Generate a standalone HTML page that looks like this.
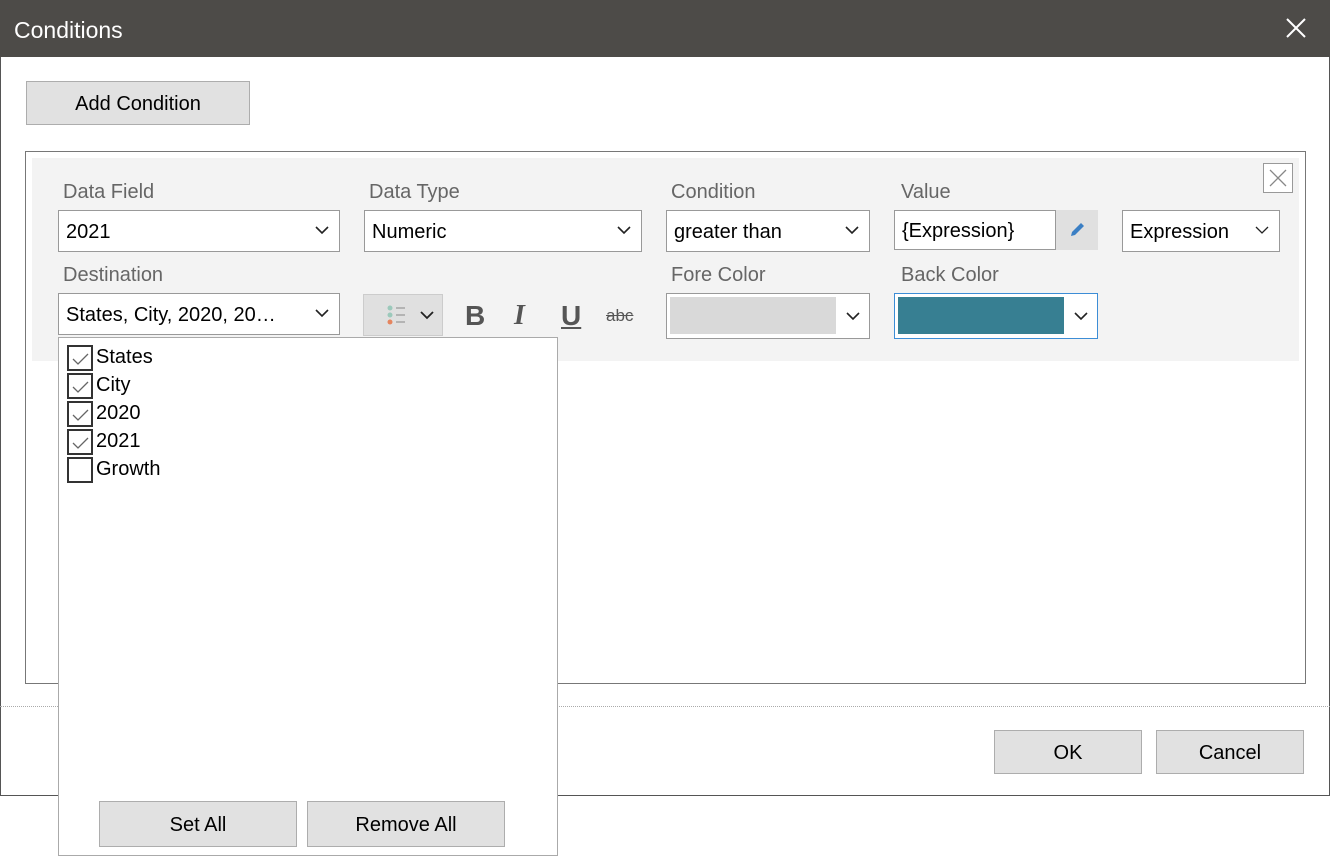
<!DOCTYPE html>
<html><head><meta charset="utf-8"><style>
*{box-sizing:border-box;margin:0;padding:0}
body{width:1330px;height:856px;background:#fff;position:relative;overflow:hidden;font-family:"Liberation Sans",sans-serif;font-size:20px;color:#000}
.a{position:absolute}
.title{left:0;top:0;width:1330px;height:57px;background:#4d4b48;color:#fff;font-size:23px;padding:17px 0 0 14px}
.btn{position:absolute;background:#e1e1e1;border:1px solid #adadad;display:flex;align-items:center;justify-content:center;font-size:20px;padding-top:2px}
.lbl{position:absolute;color:#666;font-size:20px}
.dd{position:absolute;background:#fff;border:1px solid #999;padding:2px 0 0 7px;display:flex;align-items:center;font-size:20px}
.chev{position:absolute;right:10px;top:50%;margin-top:-5px}
.cb{position:absolute;left:8px;width:26px;height:26px;border:2px solid #333;background:#fff}
.it{position:absolute;left:37px;font-size:20px}
</style></head><body>
<div class="a" style="left:0;top:0;width:1330px;height:796px;border-right:1px solid #555;border-bottom:1px solid #555;border-left:1px solid #555"></div>
<div class="a title">Conditions</div>
<svg class="a" style="left:1285px;top:17px" width="22" height="22"><path d="M2 2L20 20M20 2L2 20" stroke="#fff" stroke-width="2"/></svg>
<div class="btn" style="left:26px;top:81px;width:224px;height:44px">Add Condition</div>
<div class="a" style="left:25px;top:151px;width:1281px;height:533px;border:1px solid #777"></div>
<div class="a" style="left:32px;top:158px;width:1267px;height:203px;background:#f3f3f3"></div>
<div class="a" style="left:1263px;top:163px;width:30px;height:30px;border:1px solid #999;background:#fff"></div>
<svg class="a" style="left:1268px;top:168px" width="20" height="20"><path d="M2 2L18 18M18 2L2 18" stroke="#888" stroke-width="1.3"/></svg>
<div class="lbl" style="left:63px;top:181px">Data Field</div>
<div class="lbl" style="left:369px;top:181px">Data Type</div>
<div class="lbl" style="left:671px;top:181px">Condition</div>
<div class="lbl" style="left:901px;top:181px">Value</div>
<div class="lbl" style="left:63px;top:264px">Destination</div>
<div class="lbl" style="left:671px;top:264px">Fore Color</div>
<div class="lbl" style="left:901px;top:264px">Back Color</div>
<div class="dd" style="left:58px;top:210px;width:282px;height:42px">2021<svg class="chev" width="14" height="9"><path d="M1 1L7 7L13 1" stroke="#222" stroke-width="1.6" fill="none"/></svg></div>
<div class="dd" style="left:364px;top:210px;width:278px;height:42px">Numeric<svg class="chev" width="14" height="9"><path d="M1 1L7 7L13 1" stroke="#222" stroke-width="1.6" fill="none"/></svg></div>
<div class="dd" style="left:666px;top:210px;width:204px;height:42px">greater than<svg class="chev" width="14" height="9"><path d="M1 1L7 7L13 1" stroke="#222" stroke-width="1.6" fill="none"/></svg></div>
<div class="dd" style="left:894px;top:210px;width:162px;height:40px">{Expression}</div>
<div class="a" style="left:1056px;top:210px;width:42px;height:40px;background:#e0e0e0"></div>
<svg class="a" style="left:1068px;top:221px" width="18" height="18"><path d="M3 15L4 11L13 2L16 5L7 14Z" fill="#3b7fc4"/></svg>
<div class="dd" style="left:1122px;top:210px;width:158px;height:42px">Expression<svg class="chev" width="14" height="9"><path d="M1 1L7 7L13 1" stroke="#222" stroke-width="1.3" fill="none"/></svg></div>
<div class="dd" style="left:58px;top:293px;width:282px;height:42px">States, City, 2020, 20…<svg class="chev" width="14" height="9"><path d="M1 1L7 7L13 1" stroke="#222" stroke-width="1.6" fill="none"/></svg></div>
<div class="a" style="left:363px;top:294px;width:80px;height:42px;background:#e0e0e0;border:1px solid #ccc"></div>
<svg class="a" style="left:385px;top:305px" width="50" height="22"><circle cx="5" cy="3" r="2.5" fill="#9cc9bb"/><circle cx="5" cy="10" r="2.5" fill="#9cc9bb"/><circle cx="5" cy="17" r="2.5" fill="#e5855f"/><path d="M11 3H20M11 10H20M11 17H20" stroke="#999" stroke-width="1.2"/><path d="M36 7L42 13L48 7" stroke="#222" stroke-width="1.8" fill="none"/></svg>
<div class="a" style="left:465px;top:300px;font-size:28px;font-weight:bold;color:#555">B</div>
<div class="a" style="left:514px;top:300px;font-size:28px;font-weight:bold;font-style:italic;font-family:'Liberation Serif',serif;color:#555">I</div>
<div class="a" style="left:561px;top:300px;font-size:28px;font-weight:bold;color:#555;text-decoration:underline">U</div>
<div class="a" style="left:606px;top:306px;font-size:17px;color:#555;text-decoration:line-through">abc</div>
<div class="a" style="left:666px;top:293px;width:204px;height:46px;border:1px solid #999;background:#fff"></div>
<div class="a" style="left:670px;top:297px;width:166px;height:37px;background:#d9d9d9"></div>
<svg class="a" style="left:846px;top:312px" width="14" height="9"><path d="M1 1L7 7L13 1" stroke="#222" stroke-width="1.6" fill="none"/></svg>
<div class="a" style="left:894px;top:293px;width:204px;height:46px;border:1px solid #3c8dd6;background:#fff"></div>
<div class="a" style="left:898px;top:297px;width:166px;height:37px;background:#377f92"></div>
<svg class="a" style="left:1074px;top:312px" width="14" height="9"><path d="M1 1L7 7L13 1" stroke="#222" stroke-width="1.6" fill="none"/></svg>
<div class="a" style="left:0;top:706px;width:1330px;border-top:1px dotted #aaa"></div>
<div class="btn" style="left:994px;top:730px;width:148px;height:44px">OK</div>
<div class="btn" style="left:1156px;top:730px;width:148px;height:44px">Cancel</div>
<div class="a" style="left:58px;top:337px;width:500px;height:519px;border:1px solid #aaa;background:#fff">
<div class="cb" style="top:7px"></div><div class="it" style="top:8px">States</div>
<div class="cb" style="top:35px"></div><div class="it" style="top:36px">City</div>
<div class="cb" style="top:63px"></div><div class="it" style="top:64px">2020</div>
<div class="cb" style="top:91px"></div><div class="it" style="top:92px">2021</div>
<div class="cb" style="top:119px"></div><div class="it" style="top:120px">Growth</div>
<svg class="a" style="left:10px;top:9px" width="22" height="110"><path d="M4 12L9 17L19 7M4 40L9 45L19 35M4 68L9 73L19 63M4 96L9 101L19 91" stroke="#666" stroke-width="1.3" fill="none"/></svg>
<div class="btn" style="left:40px;top:463px;width:198px;height:46px">Set All</div>
<div class="btn" style="left:248px;top:463px;width:198px;height:46px">Remove All</div>
</div>
</body></html>
